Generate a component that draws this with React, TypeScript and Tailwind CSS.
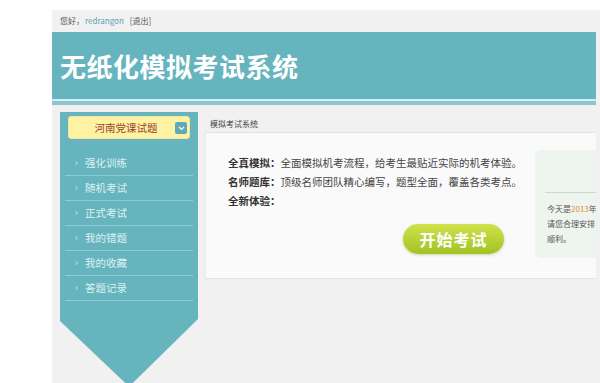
import React from "react"

const menu = ["强化训练", "随机考试", "正式考试", "我的错题", "我的收藏", "答题记录"]

const features = [
    { label: "全真模拟：", text: "全面模拟机考流程，给考生最贴近实际的机考体验。" },
    { label: "名师题库：", text: "顶级名师团队精心编写，题型全面，覆盖各类考点。" },
    { label: "全新体验：", text: "" },
]

export default function App() {
    return (
        <div className="w-[600px] h-[383px] overflow-hidden bg-white font-['Noto_Sans_CJK_SC',sans-serif]">
            <div className="ml-[52px] mt-[10px] w-[548px] h-[373px] bg-[#f1f1f1]">
                {/* top bar */}
                <div className="h-[22px] pl-[8px] flex items-center text-[8px] text-[#555]">
                    <span>您好，</span>
                    <span className="text-[#5aa3b3] ml-[1px]">redrangon</span>
                    <span className="ml-[6px]">[退出]</span>
                </div>

                {/* header */}
                <div className="w-[544px]">
                    <div className="h-[67px] bg-[#66b5be] flex items-center pl-[8px]">
                        <h1 className="text-white text-[26px] font-bold tracking-[0.5px] leading-none">无纸化模拟考试系统</h1>
                    </div>
                    <div className="h-[2px] bg-[#d6eef0]" />
                    <div className="h-[4px] bg-[#8fc3d2]" />
                </div>

                {/* body */}
                <div className="flex pl-[8px] pt-[7px] gap-[7px]">
                    <aside className="w-[138px] h-[272px] shrink-0 bg-[#66b5be] [clip-path:polygon(0_0,100%_0,100%_207px,52%_100%,48%_100%,0_209px)]">
                        <div className="mt-[4px] mx-[8px] h-[23px] rounded-[3px] bg-[#fdf3a3] border border-[#f4e6a0] flex items-center relative">
                            <span className="flex-1 text-center text-[10.5px] text-[#9b3f2e] pr-[6px]">河南党课试题</span>
                            <span className="absolute right-[2px] top-[5px] w-[12px] h-[12px] rounded-[2px] bg-[#5fa9b8] flex items-center justify-center">
                                <svg width="7" height="5" viewBox="0 0 7 5">
                                    <path d="M1 1 L3.5 3.5 L6 1" stroke="white" strokeWidth="1.2" fill="none" />
                                </svg>
                            </span>
                        </div>
                        <ul className="mt-[12px] mx-[5px]">
                            {menu.map((m) => (
                                <li key={m} className="h-[25px] border-b border-[#8fcbd2] flex items-center text-[10.5px] text-[#dff0f2]">
                                    <span className="w-[20px] pl-[10px] text-[9px] text-[#d4ecef]">›</span>
                                    <span>{m}</span>
                                </li>
                            ))}
                        </ul>
                    </aside>

                    <main className="w-[391px]">
                        <div className="h-[21px] border-b border-[#e4e4e4] flex items-center pl-[5px] pt-[3px] text-[8px] text-[#444]">
                            模拟考试系统
                        </div>
                        <div className="h-[145px] bg-[#fafafa] border-l border-[#e6eef0] flex shadow-[0_1px_1px_rgba(0,0,0,0.05)]">
                            <div className="flex-1 pl-[22px] pt-[20px]">
                                {features.map((f) => (
                                    <div key={f.label} className="h-[19px] flex items-center text-[10.5px] text-[#444]">
                                        <span className="font-bold text-[#333]">{f.label}</span>
                                        <span>{f.text}</span>
                                    </div>
                                ))}
                                <div className="flex justify-end pr-[31px] mt-[14px]">
                                    <button className="w-[101px] h-[30px] rounded-full bg-gradient-to-b from-[#cfe24a] to-[#a2c223] text-white text-[16px] font-bold tracking-[1px] shadow-[0_1px_3px_rgba(120,150,20,0.35)]">
                                        开始考试
                                    </button>
                                </div>
                            </div>
                            <div className="w-[61px] mt-[17px] h-[108px] bg-[#eef4ee] rounded-l-[6px] overflow-hidden">
                                <div className="h-[43px] border-b border-[#cfd8cf] ml-[10px]" />
                                <div className="pl-[12px] pt-[8px] text-[8px] leading-[15px] text-[#555] whitespace-nowrap">
                                    <div>今天是<span className="text-[#e38b2c]">2013</span>年</div>
                                    <div>请您合理安排</div>
                                    <div>顺利。</div>
                                </div>
                            </div>
                        </div>
                    </main>
                </div>
            </div>
        </div>
    )
}
